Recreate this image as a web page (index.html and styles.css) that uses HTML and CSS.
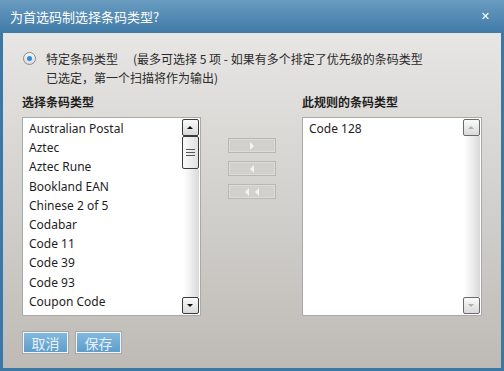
FILE: index.html
```html
<!DOCTYPE html>
<html>
    <head>
        <title>为首选码制选择条码类型?</title>
        <link rel="stylesheet" href="styles.css">
    </head>
    <body>
        <div class="dialog">
            <div class="title_bar">
                <span class="title">为首选码制选择条码类型?</span>
                <span class="close">✕</span>
            </div>
            <div class="dialog_body">
                <div class="option">
                    <span class="radio"><span class="dot"></span></span>
                    <div class="option_text">
                        <div>特定条码类型<span class="note">(最多可选择 5 项 - 如果有多个排定了优先级的条码类型</span></div>
                        <div>已选定，第一个扫描将作为输出)</div>
                    </div>
                </div>

                <div class="lists">
                    <div class="list_col">
                        <div class="list_head">选择条码类型</div>
                        <div class="list_box">
                            <div class="items">
                                <div>Australian Postal</div>
                                <div>Aztec</div>
                                <div>Aztec Rune</div>
                                <div>Bookland EAN</div>
                                <div>Chinese 2 of 5</div>
                                <div>Codabar</div>
                                <div>Code 11</div>
                                <div>Code 39</div>
                                <div>Code 93</div>
                                <div>Coupon Code</div>
                            </div>
                            <div class="scroll">
                                <div class="sbtn up"></div>
                                <div class="thumb"><span></span><span></span><span></span></div>
                                <div class="track"></div>
                                <div class="sbtn down"></div>
                            </div>
                        </div>
                    </div>

                    <div class="move_btns">
                        <div class="move"><span class="tri right"></span></div>
                        <div class="move"><span class="tri left"></span></div>
                        <div class="move"><span class="tri left"></span><span class="tri left"></span></div>
                    </div>

                    <div class="list_col">
                        <div class="list_head">此规则的条码类型</div>
                        <div class="list_box wide">
                            <div class="items">
                                <div>Code 128</div>
                            </div>
                            <div class="scroll disabled">
                                <div class="sbtn up"></div>
                                <div class="track"></div>
                                <div class="sbtn down"></div>
                            </div>
                        </div>
                    </div>
                </div>

                <div class="footer">
                    <div class="btn">取消</div>
                    <div class="btn">保存</div>
                </div>
            </div>
        </div>
    </body>
</html>
```
FILE: styles.css
```css
body {
    margin: 0;
    font-family: "Noto Sans", "Noto Sans CJK SC", sans-serif;
    font-size: 12px;
    color: #1e1e1e;
}

.dialog {
    width: 504px;
    height: 371px;
    background-color: #3b78a6;
    display: flex;
    flex-direction: column;
}

.title_bar {
    height: 33px;
    background: linear-gradient(#6a9cc0, #3f7aa7);
    color: white;
    display: flex;
    align-items: center;
    justify-content: space-between;
    padding: 0 14px 0 10px;
    box-sizing: border-box;
}

.title {
    font-family: "Noto Sans CJK SC", sans-serif;
    font-size: 13px;
}

.close {
    font-size: 11px;
    font-family: "DejaVu Sans", sans-serif;
}

.dialog_body {
    height: 335px;
    margin: 0 3px;
    background: linear-gradient(#e7e6e4, #bebbb6);
    padding: 16px 0 0 19px;
    box-sizing: border-box;
}

.option {
    display: flex;
    flex-direction: row;
}

.radio {
    width: 11px;
    height: 11px;
    border: 1px solid #8a8a8a;
    border-radius: 50%;
    background: linear-gradient(#f4f4f4, #dcdcdc);
    margin: 3px 10px 0 1px;
    display: flex;
    align-items: center;
    justify-content: center;
}

.dot {
    width: 5px;
    height: 5px;
    border-radius: 50%;
    background-color: #2d8be0;
}

.option_text {
    font-family: "Noto Sans CJK SC", sans-serif;
    font-size: 12px;
    line-height: 19px;
    color: #2a2a2a;
}

.note {
    margin-left: 15px;
}

.lists {
    display: flex;
    flex-direction: row;
    margin-top: 7px;
}

.list_head {
    font-family: "Noto Sans CJK SC", sans-serif;
    font-weight: bold;
    font-size: 12px;
    line-height: 16px;
    margin-bottom: 7px;
}

.list_box {
    width: 179px;
    height: 199px;
    box-sizing: border-box;
    background-color: white;
    border: 1px solid #a9a9a9;
    display: flex;
    flex-direction: row;
}

.list_box.wide {
    width: 180px;
}

.items {
    flex: 1;
    padding: 1px 0 0 6px;
    line-height: 19.2px;
    font-size: 12px;
}

.scroll {
    width: 17px;
    margin: 1px 1px 1px 0;
    display: flex;
    flex-direction: column;
    align-items: center;
}

.track {
    flex: 1;
    width: 16px;
    background: linear-gradient(to right, #ffffff, #f2f2f2 40%, #d8d8d8);
}

.sbtn {
    width: 15px;
    height: 15px;
    border: 1px solid #3a3a3a;
    border-radius: 2px;
    background: linear-gradient(#fafafa, #d9d9d9);
    position: relative;
}

.sbtn::after {
    content: "";
    position: absolute;
    left: 4px;
    top: 6px;
    border-left: 3px solid transparent;
    border-right: 3px solid transparent;
}

.sbtn.up::after {
    border-bottom: 3px solid #111;
}

.sbtn.down::after {
    border-top: 3px solid #111;
}

.disabled .sbtn {
    border-color: #6a6a6a;
}

.disabled .sbtn.up::after {
    border-bottom-color: #b0b0b0;
}

.disabled .sbtn.down::after {
    border-top-color: #b0b0b0;
}

.thumb {
    width: 15px;
    height: 31px;
    border: 1px solid #3a3a3a;
    border-radius: 2px;
    background: linear-gradient(to right, #fafafa, #e0e0e0);
    display: flex;
    flex-direction: column;
    align-items: center;
    justify-content: center;
    gap: 2px;
}

.thumb > span {
    width: 9px;
    height: 1px;
    background-color: #555;
}

.move_btns {
    width: 101px;
    display: flex;
    flex-direction: column;
    align-items: center;
    padding-top: 44px;
    gap: 8px;
}

.move {
    width: 48px;
    height: 15px;
    box-sizing: border-box;
    border: 1px solid #b9b7b3;
    box-shadow: inset 0 0 0 1px #dddcd9;
    background-color: #d2d0cc;
    display: flex;
    align-items: center;
    justify-content: center;
    gap: 6px;
}

.tri {
    width: 0;
    height: 0;
    border-top: 4px solid transparent;
    border-bottom: 4px solid transparent;
}

.tri.right {
    border-left: 4px solid #f4f4f4;
}

.tri.left {
    border-right: 4px solid #f4f4f4;
}

.footer {
    display: flex;
    flex-direction: row;
    gap: 6px;
    margin-top: 15px;
}

.btn {
    width: 47px;
    height: 23px;
    box-sizing: border-box;
    border: 1px solid #a8a8a8;
    box-shadow: inset 0 0 0 1px #f2f6fa;
    background: linear-gradient(#85badf, #5c9bc9);
    color: #e6f0f8;
    font-family: "Noto Sans CJK SC", sans-serif;
    font-size: 14px;
    display: flex;
    align-items: center;
    justify-content: center;
}
```
